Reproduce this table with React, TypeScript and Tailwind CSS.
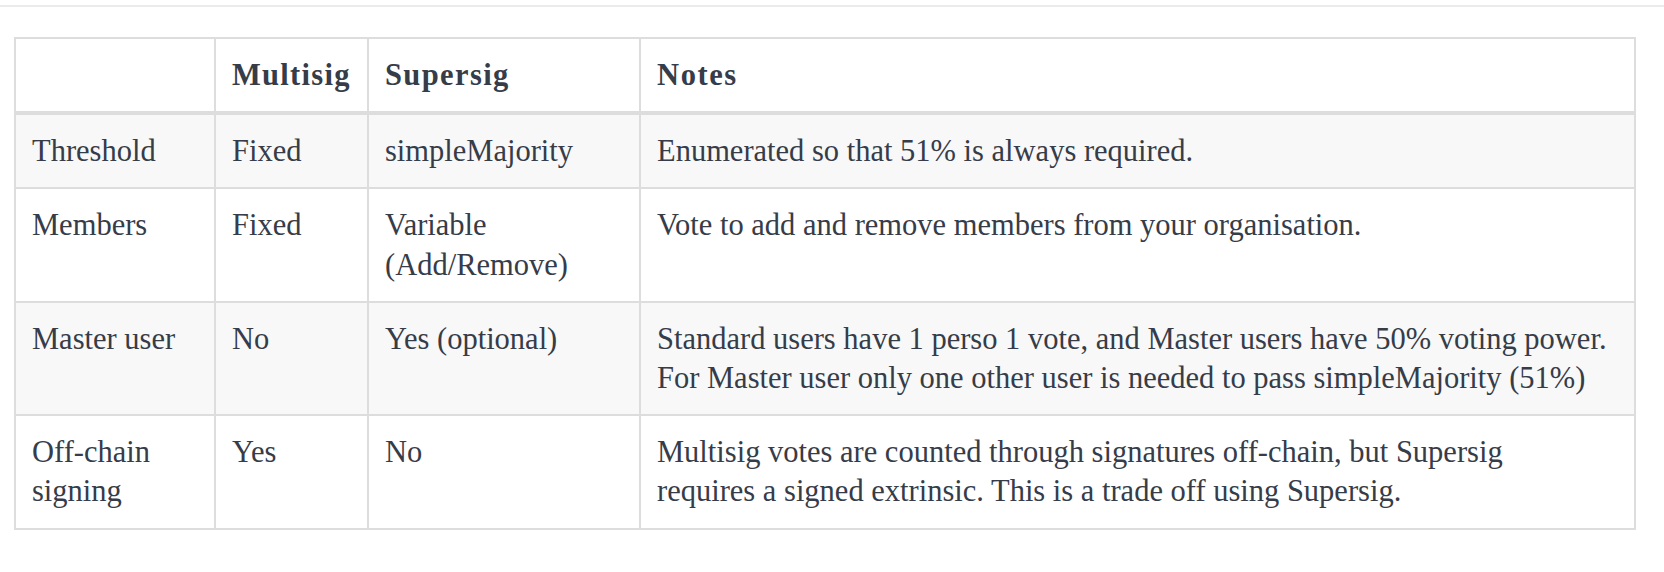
import React from "react";

type Row = {
  label: React.ReactNode;
  multisig: string;
  supersig: React.ReactNode;
  notes: string[];
};

const rows: Row[] = [
  {
    label: "Threshold",
    multisig: "Fixed",
    supersig: "simpleMajority",
    notes: ["Enumerated so that 51% is always required."],
  },
  {
    label: "Members",
    multisig: "Fixed",
    supersig: (
      <>
        Variable
        <br />
        (Add/Remove)
      </>
    ),
    notes: ["Vote to add and remove members from your organisation."],
  },
  {
    label: "Master user",
    multisig: "No",
    supersig: "Yes (optional)",
    notes: [
      "Standard users have 1 perso 1 vote, and Master users have 50% voting power.",
      "For Master user only one other user is needed to pass simpleMajority (51%)",
    ],
  },
  {
    label: (
      <>
        Off-chain
        <br />
        signing
      </>
    ),
    multisig: "Yes",
    supersig: "No",
    notes: [
      "Multisig votes are counted through signatures off-chain, but Supersig",
      "requires a signed extrinsic. This is a trade off using Supersig.",
    ],
  },
];

const cell =
  "border-2 border-[#dddddd] px-4 pt-[17px] pb-[16px] align-top text-left";

export default function App() {
  return (
    <div className="min-h-[572px] w-[1664px] bg-white font-['Liberation_Serif','DejaVu_Serif',serif] text-[30.5px] leading-[39.2px] text-[#363c48]">
      <div className="pt-[5px]">
        <div className="h-[2px] w-full bg-[#ebebeb]" />
      </div>

      <div className="pl-[14px] pt-[30px]">
        <table className="w-[1620px] table-fixed border-collapse">
          <colgroup>
            <col className="w-[200px]" />
            <col className="w-[153px]" />
            <col className="w-[272px]" />
            <col className="w-[995px]" />
          </colgroup>
          <thead>
            <tr className="bg-white">
              <th className={`${cell} border-b-4 font-bold`}></th>
              <th className={`${cell} border-b-4 font-bold tracking-[1.3px]`}>
                Multisig
              </th>
              <th className={`${cell} border-b-4 font-bold tracking-[1.4px]`}>
                Supersig
              </th>
              <th className={`${cell} border-b-4 font-bold tracking-[1.6px]`}>
                Notes
              </th>
            </tr>
          </thead>
          <tbody>
            {rows.map((row, i) => (
              <tr key={i} className={i % 2 === 0 ? "bg-[#f8f8f8]" : "bg-white"}>
                <td className={cell}>{row.label}</td>
                <td className={cell}>{row.multisig}</td>
                <td className={cell}>{row.supersig}</td>
                <td className={cell}>
                  {row.notes.map((line, j) => (
                    <div key={j} className="whitespace-nowrap">
                      {line}
                    </div>
                  ))}
                </td>
              </tr>
            ))}
          </tbody>
        </table>
      </div>
    </div>
  );
}
